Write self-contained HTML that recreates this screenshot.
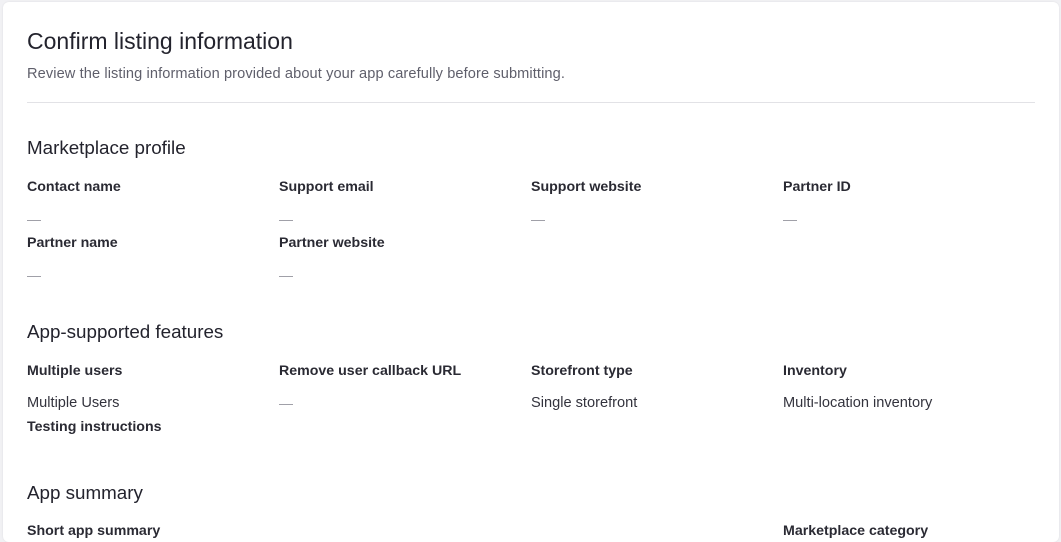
<!DOCTYPE html>
<html><head><meta charset="utf-8"><style>
html,body{margin:0;padding:0;background:#f1f1f4;width:1061px;height:530px;overflow:hidden;font-family:"Liberation Sans",sans-serif;}
.card{position:absolute;left:3px;top:2px;width:1056px;height:540px;background:#fff;border-radius:6px;box-shadow:0 0 2px rgba(0,0,0,.08);}
.t{position:absolute;white-space:nowrap;line-height:20px;height:20px;}
.h1{font-size:23px;color:#23232d;}
.sub{font-size:14.6px;color:#5f5f6b;letter-spacing:0.1px;}
.h2{font-size:18.8px;color:#23232d;}
.lb{font-size:14.2px;font-weight:bold;color:#2a2a33;}
.v{font-size:14.6px;color:#33333d;}
.d{font-size:14px;color:#9a9aa2;}
.hr{position:absolute;left:27px;top:102px;width:1008px;height:1px;background:#e2e2e6;}
</style></head><body>
<div class="card"></div>
<div class="t h1" style="left:27px;top:31px">Confirm listing information</div>
<div class="t sub" style="left:27px;top:64px">Review the listing information provided about your app carefully before submitting.</div>
<div class="hr"></div>
<div class="t h2" style="left:27px;top:138px">Marketplace profile</div>
<div class="t lb" style="left:27px;top:177px">Contact name</div>
<div class="t lb" style="left:279px;top:177px">Support email</div>
<div class="t lb" style="left:531px;top:177px">Support website</div>
<div class="t lb" style="left:783px;top:177px">Partner ID</div>
<div class="t d" style="left:27px;top:209px">—</div>
<div class="t d" style="left:279px;top:209px">—</div>
<div class="t d" style="left:531px;top:209px">—</div>
<div class="t d" style="left:783px;top:209px">—</div>
<div class="t lb" style="left:27px;top:233px">Partner name</div>
<div class="t lb" style="left:279px;top:233px">Partner website</div>
<div class="t d" style="left:27px;top:265px">—</div>
<div class="t d" style="left:279px;top:265px">—</div>
<div class="t h2" style="left:27px;top:322px">App-supported features</div>
<div class="t lb" style="left:27px;top:361px">Multiple users</div>
<div class="t lb" style="left:279px;top:361px">Remove user callback URL</div>
<div class="t lb" style="left:531px;top:361px">Storefront type</div>
<div class="t lb" style="left:783px;top:361px">Inventory</div>
<div class="t v" style="left:27px;top:393px">Multiple Users</div>
<div class="t d" style="left:279px;top:393px">—</div>
<div class="t v" style="left:531px;top:393px">Single storefront</div>
<div class="t v" style="left:783px;top:393px">Multi-location inventory</div>
<div class="t lb" style="left:27px;top:417px">Testing instructions</div>
<div class="t h2" style="left:27px;top:483px">App summary</div>
<div class="t lb" style="left:27px;top:521px">Short app summary</div>
<div class="t lb" style="left:783px;top:521px">Marketplace category</div>
</body></html>
